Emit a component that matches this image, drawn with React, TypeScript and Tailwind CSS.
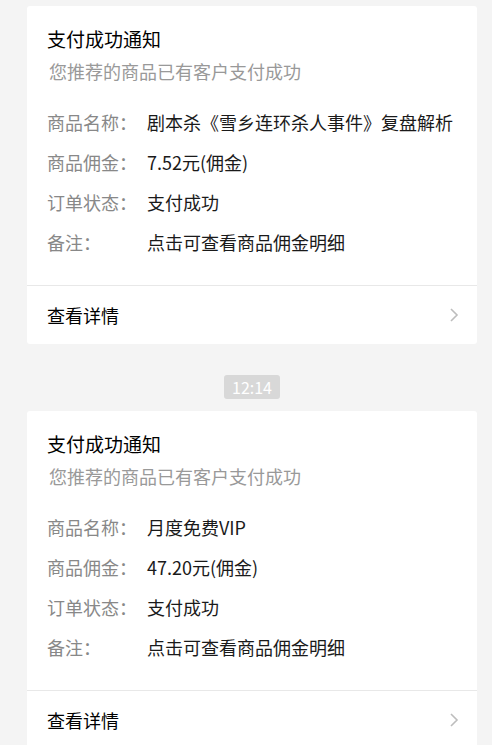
import React from 'react';

interface Notice {
  name: string;
  commission: string;
  status: string;
  remark: string;
}

const notices: Notice[] = [
  {
    name: '剧本杀《雪乡连环杀人事件》复盘解析',
    commission: '7.52元(佣金)',
    status: '支付成功',
    remark: '点击可查看商品佣金明细',
  },
  {
    name: '月度免费VIP',
    commission: '47.20元(佣金)',
    status: '支付成功',
    remark: '点击可查看商品佣金明细',
  },
];

function Row({ label, value }: { label: string; value: string }) {
  return (
    <div className="flex h-[39.75px] items-center text-[18px]">
      <span className="w-[100px] shrink-0 text-[#888888]">{label}</span>
      <span className="text-[#1a1a1a] whitespace-nowrap">{value}</span>
    </div>
  );
}

function Card({ notice }: { notice: Notice }) {
  return (
    <div className="rounded-[3px] bg-white">
      <div className="px-[20px] pt-[20px] pb-[23px]">
        <p className="text-[19px] leading-[26px] text-black">支付成功通知</p>
        <p className="mt-[6px] pl-[2px] text-[18px] leading-[26px] text-[#999999]">您推荐的商品已有客户支付成功</p>
        <div className="mt-[19px]">
          <Row label="商品名称：" value={notice.name} />
          <Row label="商品佣金：" value={notice.commission} />
          <Row label="订单状态：" value={notice.status} />
          <Row label="备注：" value={notice.remark} />
        </div>
      </div>
      <div className="flex h-[59px] items-center justify-between border-t border-[#e8e8e8] pl-[20px] pr-[18px]">
        <span className="text-[18px] text-black">查看详情</span>
        <svg width="10" height="16" viewBox="0 0 10 16" fill="none">
          <path d="M2 2l6 6-6 6" stroke="#bdbdbd" strokeWidth="1.6" />
        </svg>
      </div>
    </div>
  );
}

export default function App() {
  return (
    <div
      className="min-h-screen bg-[#f4f4f4] pt-[6px] pl-[27px] pr-[15px]"
      style={{ fontFamily: '"Noto Sans CJK SC", "Noto Sans", sans-serif' }}
    >
      <Card notice={notices[0]} />
      <div className="flex justify-center pt-[31px] pb-[12px]">
        <span className="flex h-[24px] w-[56px] items-center justify-center rounded-[3px] bg-[#d8d8d8] text-[16px] text-white">
          12:14
        </span>
      </div>
      <Card notice={notices[1]} />
    </div>
  );
}
